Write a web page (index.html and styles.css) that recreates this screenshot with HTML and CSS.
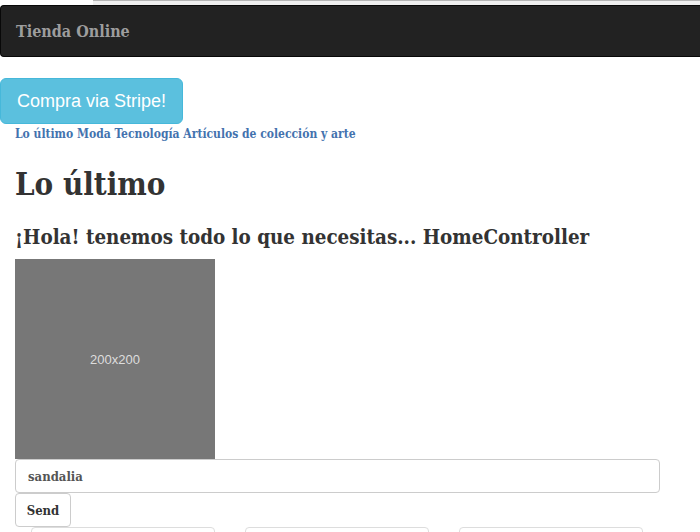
FILE: index.html
```html
<!DOCTYPE html>
<html lang="es">
<head>
<meta charset="utf-8">
<title>Tienda Online</title>
<link rel="stylesheet" href="styles.css">
</head>
<body>
<div class="topstrip"><div class="topstrip-fill"></div></div>
<nav class="navbar">
  <span class="brand">Tienda Online</span>
</nav>
<button class="btn-info">Compra via Stripe!</button>
<div class="container">
  <div class="cats">
    <a href="#">Lo último</a> <a href="#">Moda</a> <a href="#">Tecnología</a> <a href="#">Artículos de colección y arte</a>
  </div>
  <h1 class="title">Lo último</h1>
  <h2 class="subtitle">¡Hola! tenemos todo lo que necesitas... HomeController</h2>
  <div class="placeholder">200x200</div>
  <form class="search">
    <input class="field" type="text" value="sandalia">
    <button class="btn-send" type="button">Send</button>
  </form>
  <div class="cards">
    <div class="card"></div>
    <div class="card"></div>
    <div class="card"></div>
  </div>
</div>
</body>
</html>
```
FILE: styles.css
```css
html, body {
  margin: 0;
  padding: 0;
  background: #fff;
  overflow: hidden;
}
body {
  font-family: "DejaVu Serif Condensed", "DejaVu Serif", serif;
  color: #333;
  width: 700px;
  height: 532px;
}
.topstrip {
  height: 5px;
  display: flex;
  justify-content: flex-end;
}
.topstrip-fill {
  width: 607px;
  background: #efefef;
  border-top: 1px solid #b5b5b5;
  box-sizing: border-box;
}
.navbar {
  height: 52px;
  box-sizing: border-box;
  background: #222;
  border: 1px solid #080808;
  border-right: none;
  border-radius: 4px 0 0 4px;
  display: flex;
  align-items: center;
  padding-left: 15px;
  padding-top: 1px;
  margin-bottom: 21px;
}
.brand {
  color: #9d9d9d;
  font-weight: bold;
  font-size: 16px;
}
.btn-info {
  display: block;
  margin: 0;
  width: 183px;
  height: 46px;
  background: #5bc0de;
  border: 1px solid #46b8da;
  border-radius: 6px;
  color: #fff;
  font-family: "Liberation Sans", Arial, sans-serif;
  font-size: 18px;
  padding: 0;
}
.container {
  padding-left: 15px;
}
.cats {
  margin-top: 3px;
  font-size: 12px;
  font-weight: bold;
  line-height: 15px;
}
.cats a {
  color: #4372ae;
  text-decoration: none;
}
.title {
  font-size: 31px;
  margin: 22px 0 0;
  line-height: 40px;
  color: #333;
}
.subtitle {
  font-size: 20.4px;
  margin: 19px 0 0;
  line-height: 28px;
  color: #333;
}
.placeholder {
  width: 200px;
  height: 200px;
  background: #777;
  color: #ddd;
  font-family: "Liberation Sans", Arial, sans-serif;
  font-size: 13px;
  display: flex;
  align-items: center;
  justify-content: center;
  margin-top: 8px;
}
.search {
  margin: 0;
  display: flex;
  flex-direction: column;
  align-items: flex-start;
}
.field {
  width: 645px;
  height: 34px;
  box-sizing: border-box;
  border: 1px solid #ccc;
  border-radius: 4px;
  padding: 6px 12px;
  font-family: "DejaVu Serif Condensed", "DejaVu Serif", serif;
  font-size: 13px;
  font-weight: bold;
  color: #555;
  margin: 0;
}
.btn-send {
  height: 34px;
  width: 56px;
  box-sizing: border-box;
  background: #fff;
  border: 1px solid #ccc;
  border-radius: 4px;
  font-family: "DejaVu Serif Condensed", "DejaVu Serif", serif;
  font-size: 13px;
  font-weight: bold;
  color: #333;
  padding: 0;
  margin: 0;
}
.cards {
  display: flex;
  gap: 30px;
  padding-left: 16px;
}
.card {
  width: 184px;
  height: 40px;
  box-sizing: border-box;
  border: 1px solid #ddd;
  border-radius: 4px;
}
```
